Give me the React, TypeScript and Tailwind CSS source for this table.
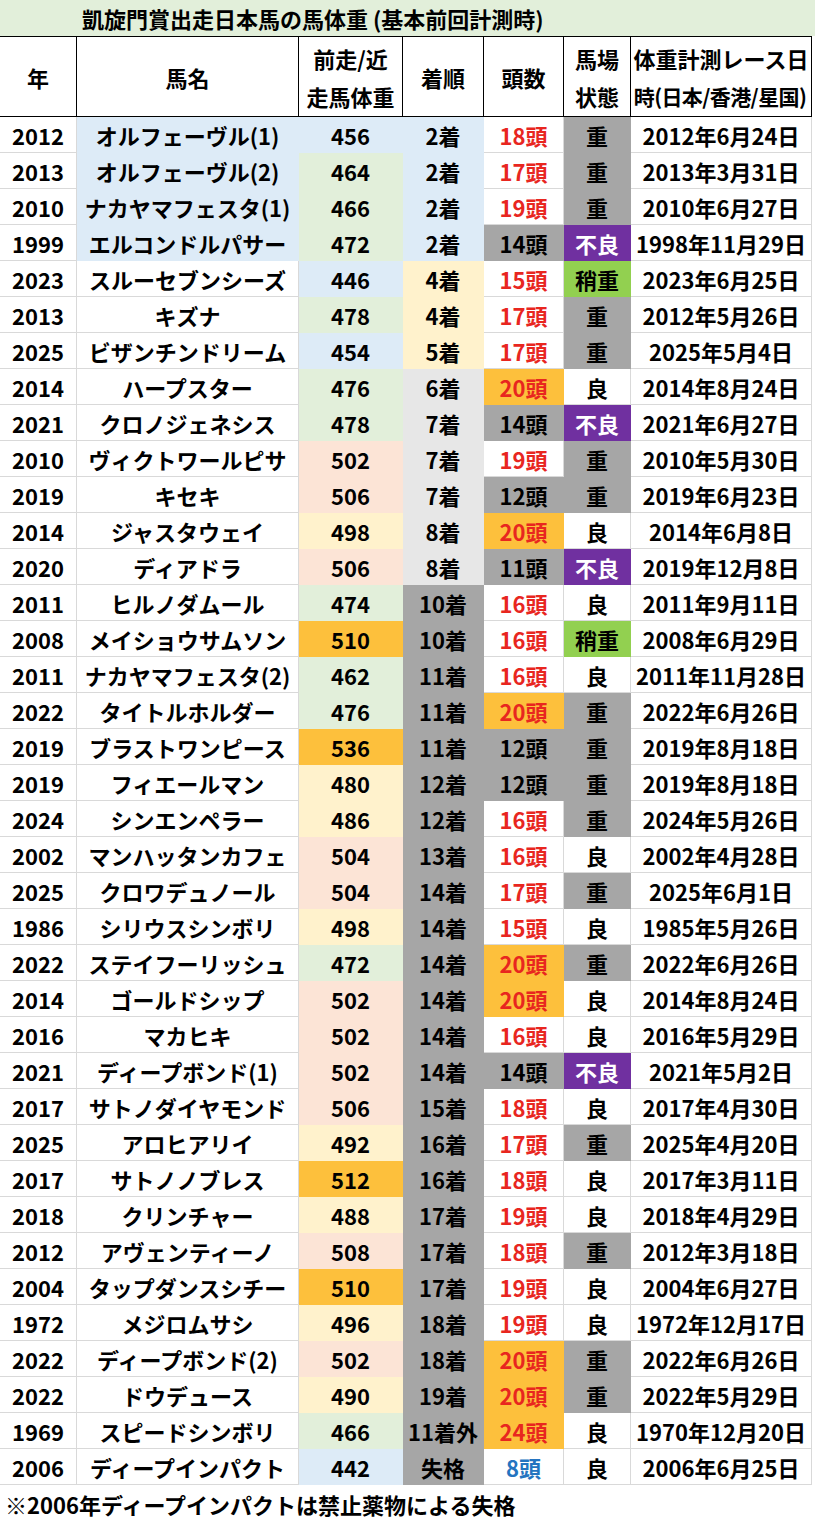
import React from "react";

type Row = [string, string, number, string, number, string, string];

const rows: Row[] = [
  ["2012", "オルフェーヴル(1)", 456, "2着", 18, "重", "2012年6月24日"],
  ["2013", "オルフェーヴル(2)", 464, "2着", 17, "重", "2013年3月31日"],
  ["2010", "ナカヤマフェスタ(1)", 466, "2着", 19, "重", "2010年6月27日"],
  ["1999", "エルコンドルパサー", 472, "2着", 14, "不良", "1998年11月29日"],
  ["2023", "スルーセブンシーズ", 446, "4着", 15, "稍重", "2023年6月25日"],
  ["2013", "キズナ", 478, "4着", 17, "重", "2012年5月26日"],
  ["2025", "ビザンチンドリーム", 454, "5着", 17, "重", "2025年5月4日"],
  ["2014", "ハープスター", 476, "6着", 20, "良", "2014年8月24日"],
  ["2021", "クロノジェネシス", 478, "7着", 14, "不良", "2021年6月27日"],
  ["2010", "ヴィクトワールピサ", 502, "7着", 19, "重", "2010年5月30日"],
  ["2019", "キセキ", 506, "7着", 12, "重", "2019年6月23日"],
  ["2014", "ジャスタウェイ", 498, "8着", 20, "良", "2014年6月8日"],
  ["2020", "ディアドラ", 506, "8着", 11, "不良", "2019年12月8日"],
  ["2011", "ヒルノダムール", 474, "10着", 16, "良", "2011年9月11日"],
  ["2008", "メイショウサムソン", 510, "10着", 16, "稍重", "2008年6月29日"],
  ["2011", "ナカヤマフェスタ(2)", 462, "11着", 16, "良", "2011年11月28日"],
  ["2022", "タイトルホルダー", 476, "11着", 20, "重", "2022年6月26日"],
  ["2019", "ブラストワンピース", 536, "11着", 12, "重", "2019年8月18日"],
  ["2019", "フィエールマン", 480, "12着", 12, "重", "2019年8月18日"],
  ["2024", "シンエンペラー", 486, "12着", 16, "重", "2024年5月26日"],
  ["2002", "マンハッタンカフェ", 504, "13着", 16, "良", "2002年4月28日"],
  ["2025", "クロワデュノール", 504, "14着", 17, "重", "2025年6月1日"],
  ["1986", "シリウスシンボリ", 498, "14着", 15, "良", "1985年5月26日"],
  ["2022", "ステイフーリッシュ", 472, "14着", 20, "重", "2022年6月26日"],
  ["2014", "ゴールドシップ", 502, "14着", 20, "良", "2014年8月24日"],
  ["2016", "マカヒキ", 502, "14着", 16, "良", "2016年5月29日"],
  ["2021", "ディープボンド(1)", 502, "14着", 14, "不良", "2021年5月2日"],
  ["2017", "サトノダイヤモンド", 506, "15着", 18, "良", "2017年4月30日"],
  ["2025", "アロヒアリイ", 492, "16着", 17, "重", "2025年4月20日"],
  ["2017", "サトノノブレス", 512, "16着", 18, "良", "2017年3月11日"],
  ["2018", "クリンチャー", 488, "17着", 19, "良", "2018年4月29日"],
  ["2012", "アヴェンティーノ", 508, "17着", 18, "重", "2012年3月18日"],
  ["2004", "タップダンスシチー", 510, "17着", 19, "良", "2004年6月27日"],
  ["1972", "メジロムサシ", 496, "18着", 19, "良", "1972年12月17日"],
  ["2022", "ディープボンド(2)", 502, "18着", 20, "重", "2022年6月26日"],
  ["2022", "ドウデュース", 490, "19着", 20, "重", "2022年5月29日"],
  ["1969", "スピードシンボリ", 466, "11着外", 24, "良", "1970年12月20日"],
  ["2006", "ディープインパクト", 442, "失格", 8, "良", "2006年6月25日"],
];

const WHITE = "bg-white border-[#d9d9d9]";
const BLUE = "bg-[#ddebf7] border-[#ddebf7]";
const GREEN = "bg-[#e2efda] border-[#e2efda]";
const YELLOW = "bg-[#fff2cc] border-[#fff2cc]";
const PINK = "bg-[#fce4d6] border-[#fce4d6]";
const ORANGE = "bg-[#fdc03c] border-[#fdc03c]";
const LGRAY = "bg-[#e7e7e7] border-[#e7e7e7]";
const DGRAY = "bg-[#a6a6a6] border-[#a6a6a6]";
const PURPLE = "bg-[#7030a0] border-[#7030a0] text-white";
const LIME = "bg-[#92d050] border-[#92d050]";

function weightCls(w: number) {
  if (w < 460) return BLUE;
  if (w < 480) return GREEN;
  if (w < 500) return YELLOW;
  if (w < 510) return PINK;
  return ORANGE;
}

function placeCls(p: string) {
  const n = parseInt(p, 10);
  if (p === "2着") return BLUE;
  if (n === 4 || n === 5) return YELLOW;
  if (n >= 6 && n <= 8) return LGRAY;
  return DGRAY;
}

function headsCls(h: number) {
  if (h >= 20) return ORANGE + " text-[#e8261f]";
  if (h === 8) return WHITE + " text-[#2474c0]";
  if (h <= 14) return DGRAY + " text-black";
  return WHITE + " text-[#e8261f]";
}

function babaCls(b: string) {
  if (b === "重") return DGRAY;
  if (b === "不良") return PURPLE;
  if (b === "稍重") return LIME;
  return WHITE;
}

const cell = "flex items-center justify-center border-r border-b whitespace-nowrap overflow-hidden";
const grid = "grid grid-cols-[77px_222px_104px_81px_80px_67px_181px] w-[812px]";
const hcell = "flex flex-col items-center justify-center border-r border-black whitespace-nowrap overflow-hidden";

export default function App() {
  return (
    <div className="w-[815px] h-[1522px] bg-white text-black font-bold text-[22px] font-['Noto_Sans_CJK_JP','Noto_Sans',sans-serif] overflow-hidden">
      <div className="h-9 bg-[#e2efda] flex items-center pl-[82px] leading-none">
        凱旋門賞出走日本馬の馬体重 (基本前回計測時)
      </div>
      <div className={grid + " grid-rows-[79px] h-[81px] border-t border-b border-black leading-[38px]"}>
        <div className={hcell}>年</div>
        <div className={hcell}>馬名</div>
        <div className={hcell}>
          <span>前走/近</span>
          <span>走馬体重</span>
        </div>
        <div className={hcell}>着順</div>
        <div className={hcell}>頭数</div>
        <div className={hcell}>
          <span>馬場</span>
          <span>状態</span>
        </div>
        <div className={hcell}>
          <span>体重計測レース日</span>
          <span className="text-[21px] tracking-[-0.6px] -ml-[2px]">時(日本/香港/星国)</span>
        </div>
      </div>
      {rows.map((r, i) => (
        <div key={i} className={grid + " grid-rows-[36px] h-9 leading-none"}>
          <div className={cell + " " + WHITE}>{r[0]}</div>
          <div className={cell + " " + (i < 4 ? BLUE : WHITE)}>{r[1]}</div>
          <div className={cell + " " + weightCls(r[2])}>{r[2]}</div>
          <div className={cell + " " + placeCls(r[3])}>{r[3]}</div>
          <div className={cell + " " + headsCls(r[4])}>{r[4]}頭</div>
          <div className={cell + " " + babaCls(r[5])}>{r[5]}</div>
          <div className={cell + " " + WHITE}>{r[6]}</div>
        </div>
      ))}
      <div className="h-[37px] flex items-center pl-[5px] leading-none">
        ※2006年ディープインパクトは禁止薬物による失格
      </div>
    </div>
  );
}
